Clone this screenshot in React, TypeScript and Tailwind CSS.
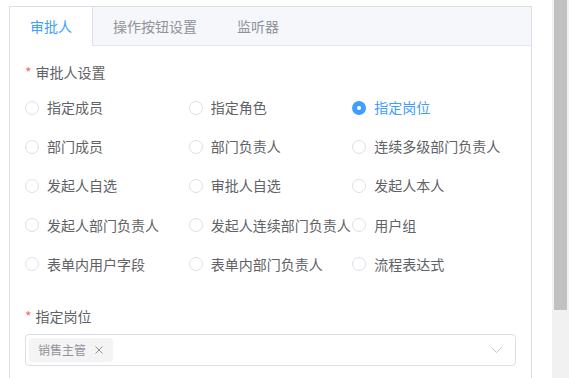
import { useState } from 'react'

const options = [
  '指定成员', '指定角色', '指定岗位',
  '部门成员', '部门负责人', '连续多级部门负责人',
  '发起人自选', '审批人自选', '发起人本人',
  '发起人部门负责人', '发起人连续部门负责人', '用户组',
  '表单内用户字段', '表单内部门负责人', '流程表达式',
]

const tabs = ['审批人', '操作按钮设置', '监听器']

function Radio({ label, checked, onSelect }: { label: string; checked: boolean; onSelect: () => void }) {
  return (
    <label className="flex h-[39.2px] cursor-pointer items-center whitespace-nowrap" onClick={onSelect}>
      {checked ? (
        <span className="flex h-[14px] w-[14px] shrink-0 items-center justify-center rounded-full bg-[#409eff]">
          <span className="h-[4px] w-[4px] rounded-full bg-white" />
        </span>
      ) : (
        <span className="h-[14px] w-[14px] shrink-0 rounded-full border border-[#dcdfe6] bg-white" />
      )}
      <span className={`ml-[8px] text-[14px] ${checked ? 'text-[#409eff]' : 'text-[#606266]'}`}>{label}</span>
    </label>
  )
}

function FieldLabel({ text }: { text: string }) {
  return (
    <div className="flex h-[22px] items-center text-[14px] leading-[22px] text-[#606266]">
      <span className="mr-[4px] text-[#f56c6c]">*</span>
      {text}
    </div>
  )
}

export default function App() {
  const [active, setActive] = useState(0)
  const [picked, setPicked] = useState('指定岗位')

  return (
    <div className="flex h-[378px] w-[569px] overflow-hidden bg-white font-['Noto_Sans_CJK_SC','Noto_Sans',sans-serif]">
      <div className="flex-1 pl-[9px] pr-[20px] pt-[6px]">
        <div className="h-[420px] border border-[#dcdfe6] bg-white">
          {/* tab header */}
          <div className="flex h-[39px] bg-[#f5f7fa]">
            {tabs.map((t, i) =>
              i === active ? (
                <div
                  key={t}
                  className={`flex h-full items-center bg-white px-[20px] text-[14px] text-[#409eff] ${i === 0 ? 'border-r' : 'border-x'} border-[#dcdfe6]`}
                >
                  {t}
                </div>
              ) : (
                <div
                  key={t}
                  onClick={() => setActive(i)}
                  className="flex h-full cursor-pointer items-center border-b border-[#e4e7ed] px-[20px] text-[14px] text-[#909399]"
                >
                  {t}
                </div>
              )
            )}
            <div className="h-full flex-1 border-b border-[#e4e7ed]" />
          </div>

          {/* body */}
          <div className="px-[15px] pt-[15px]">
            <FieldLabel text="审批人设置" />
            <div className="mt-[5px] grid grid-cols-3">
              {options.map((o) => (
                <Radio key={o} label={o} checked={picked === o} onSelect={() => setPicked(o)} />
              ))}
            </div>

            <div className="mt-[21px]">
              <FieldLabel text={picked} />
            </div>
            <div className="mt-[7px] flex h-[32px] items-center rounded-[4px] border border-[#dcdfe6] bg-white pl-[3px] pr-[13px]">
              <div className="flex h-[24px] w-[84px] items-center rounded-[4px] bg-[#f4f4f5] pl-[9px] text-[12px] text-[#909399]">
                <span>销售主管</span>
                <svg className="ml-[9px]" width="8" height="8" viewBox="0 0 8 8" fill="none" stroke="#909399" strokeWidth="1">
                  <path d="M0.5 0.5 L7.5 7.5 M7.5 0.5 L0.5 7.5" />
                </svg>
              </div>
              <div className="flex-1" />
              <svg width="11" height="6" viewBox="0 0 11 6" fill="none" stroke="#c0c4cc" strokeWidth="1">
                <path d="M0.5 0.5 L5.5 5.5 L10.5 0.5" />
              </svg>
            </div>
          </div>
        </div>
      </div>

      {/* window scrollbar */}
      <div className="w-[17px] bg-[#f1f1f1] px-[2px]">
        <div className="h-[310px] bg-[#c1c1c1]" />
      </div>
    </div>
  )
}
